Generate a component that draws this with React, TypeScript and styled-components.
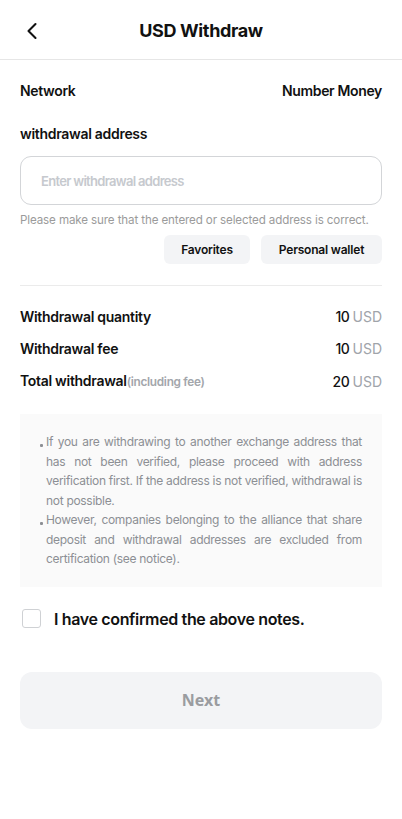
import React from "react";
import styled, { createGlobalStyle } from "styled-components";

const Global = createGlobalStyle`
  html, body { margin: 0; padding: 0; background: #fff; }
  body { font-family: Inter, "Noto Sans", "Liberation Sans", sans-serif; color: #111; -webkit-font-smoothing: antialiased; }
  * { box-sizing: border-box; }
`;

const Page = styled.div`
  width: 402px;
  min-height: 819px;
  background: #fff;
`;

const Header = styled.header`
  position: relative;
  height: 60px;
  display: flex;
  align-items: center;
  justify-content: center;
  border-bottom: 1px solid #e6e6e6;
`;

const BackButton = styled.button`
  position: absolute;
  left: 20px;
  top: 17px;
  width: 24px;
  height: 28px;
  padding: 0;
  border: 0;
  background: none;
  display: flex;
  align-items: center;
  justify-content: center;
  color: #111;
`;

const Title = styled.h1`
  margin: 0;
  font-size: 18px;
  font-weight: 700;
  line-height: 24px;
  letter-spacing: -0.35px;
  padding-top: 2px;
`;

const Body = styled.main`
  padding: 21px 20px 0;
  display: flex;
  flex-direction: column;
`;

const InfoRow = styled.div`
  display: flex;
  justify-content: space-between;
  align-items: center;
  font-size: 14px;
  font-weight: 600;
  line-height: 20px;
  letter-spacing: -0.35px;
`;

const Label = styled.div`
  margin-top: 23px;
  font-size: 14px;
  font-weight: 600;
  line-height: 20px;
  letter-spacing: -0.3px;
`;

const AddressInput = styled.input`
  margin-top: 12px;
  width: 100%;
  height: 49px;
  border: 1px solid #d3d5d8;
  border-radius: 11px;
  padding: 0 20px;
  font-family: Inter, sans-serif;
  font-size: 13px;
  font-weight: 600;
  color: #111;
  outline: none;
  &::placeholder {
    color: #c6c9ce;
    letter-spacing: -0.7px;
  }
`;

const Helper = styled.p`
  margin: 7px 0 0;
  font-size: 11.6px;
  line-height: 16px;
  color: #9b9b9b;
  letter-spacing: -0.12px;
`;

const ChipRow = styled.div`
  margin-top: 7px;
  display: flex;
  justify-content: flex-end;
  gap: 11px;
`;

const Chip = styled.button<{ $w: number }>`
  width: ${(p) => p.$w}px;
  height: 29px;
  border: 0;
  border-radius: 6px;
  background: #f3f4f6;
  font-family: Inter, sans-serif;
  font-size: 12px;
  font-weight: 600;
  color: #111;
  letter-spacing: -0.2px;
  padding: 0;
`;

const Divider = styled.hr`
  margin: 21px 0 0;
  border: 0;
  border-top: 1px solid #ebebeb;
`;

const Summary = styled.div`
  margin-top: 21px;
  display: flex;
  flex-direction: column;
  gap: 12px;
`;

const SumRow = styled.div`
  display: flex;
  justify-content: space-between;
  align-items: center;
  line-height: 20px;
  font-size: 14px;
  font-weight: 600;
  letter-spacing: -0.3px;
`;

const Sub = styled.span`
  font-size: 11.8px;
  color: #a3a6ab;
  font-weight: 600;
  letter-spacing: -0.3px;
`;

const Amount = styled.span`
  font-size: 14px;
  font-weight: 500;
  color: #111;
  letter-spacing: -0.4px;
`;

const Unit = styled.span`
  color: #a0a4aa;
  font-weight: 400;
  margin-left: 3px;
  letter-spacing: 0;
`;

const Notes = styled.ul`
  margin: 22px 0 0;
  list-style: none;
  background: #fafafa;
  padding: 18px 20px 18px 20px;
`;

const Note = styled.li`
  position: relative;
  padding-left: 6px;
  font-size: 12px;
  line-height: 19.5px;
  color: #8c8f94;
  text-align: justify;
  letter-spacing: -0.3px;
  &::before {
    content: "";
    position: absolute;
    left: 0;
    top: 12px;
    width: 2.5px;
    height: 2.5px;
    background: #8c8f94;
    border-radius: 1px;
  }
`;

const Confirm = styled.label`
  margin-top: 22px;
  display: flex;
  align-items: center;
  gap: 13px;
  padding-left: 2px;
  font-size: 16px;
  font-weight: 600;
  letter-spacing: -0.35px;
  line-height: 20px;
`;

const Box = styled.span`
  width: 19px;
  height: 19px;
  border: 1.5px solid #cfd1d4;
  border-radius: 3px;
  background: #fff;
  flex: none;
`;

const NextButton = styled.button`
  margin-top: 43px;
  width: 100%;
  height: 57px;
  border: 0;
  border-radius: 12px;
  background: #f3f4f6;
  color: #9a9ca0;
  font-family: "Noto Sans", Inter, sans-serif;
  font-size: 16px;
  font-weight: 700;
`;

export default function App() {
  return (
    <Page>
      <Global />
      <Header>
        <BackButton aria-label="Back">
          <svg width="14" height="18" viewBox="0 0 14 18" fill="none">
            <path d="M10.5 2 L3.5 9 L10.5 16" stroke="#111" strokeWidth="2.1" strokeLinecap="round" strokeLinejoin="round" />
          </svg>
        </BackButton>
        <Title>USD Withdraw</Title>
      </Header>
      <Body>
        <InfoRow>
          <span>Network</span>
          <span>Number Money</span>
        </InfoRow>
        <Label>withdrawal address</Label>
        <AddressInput placeholder="Enter withdrawal address" />
        <Helper>Please make sure that the entered or selected address is correct.</Helper>
        <ChipRow>
          <Chip $w={86}>Favorites</Chip>
          <Chip $w={121}>Personal wallet</Chip>
        </ChipRow>
        <Divider />
        <Summary>
          <SumRow>
            <span>Withdrawal quantity</span>
            <Amount>10<Unit>USD</Unit></Amount>
          </SumRow>
          <SumRow>
            <span>Withdrawal fee</span>
            <Amount>10<Unit>USD</Unit></Amount>
          </SumRow>
          <SumRow>
            <span>
              Total withdrawal<Sub>(including fee)</Sub>
            </span>
            <Amount>20<Unit>USD</Unit></Amount>
          </SumRow>
        </Summary>
        <Notes>
          <Note>
            If you are withdrawing to another exchange address that has not been verified, please proceed with address verification first. If the address is not verified, withdrawal is not possible.
          </Note>
          <Note>
            However, companies belonging to the alliance that share deposit and withdrawal addresses are excluded from certification (see notice).
          </Note>
        </Notes>
        <Confirm>
          <Box />
          I have confirmed the above notes.
        </Confirm>
        <NextButton>Next</NextButton>
      </Body>
    </Page>
  );
}
